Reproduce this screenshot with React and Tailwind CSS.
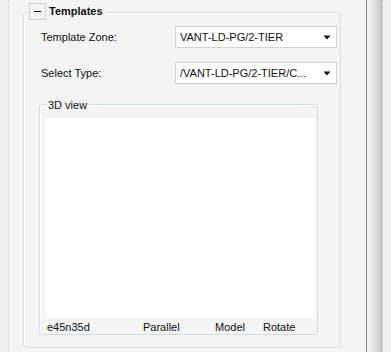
import React from "react";

const font = { fontFamily: '"Liberation Sans", Arial, sans-serif' };

function Combo({ text }) {
  return (
    <div className="w-[162px] h-[22px] bg-white border border-[#d4d4d4] flex items-center pl-[4px] pr-[4px]">
      <span className="flex-1 text-[11px] text-[#111] whitespace-nowrap overflow-hidden">{text}</span>
      <svg width="8" height="5" viewBox="0 0 8 5" className="mr-[1px]">
        <path d="M0.5 0.5 H7.5 L4 4.5 Z" fill="#111" />
      </svg>
    </div>
  );
}

export default function App() {
  return (
    <div className="w-[391px] h-[352px] flex bg-[#f4f4f4] overflow-hidden" style={font}>
      <div className="w-[8px] h-full bg-[#f0f0f0]" />
      <div className="w-[1px] h-full border-l border-dotted border-[#cfcfcf]" />
      <div className="w-[357px] h-full pl-[14px] pt-[12px]">
        <div className="relative w-[318px] h-[336px] border border-[#d3dde6] rounded-[4px] shadow-[inset_1px_1px_0_#ffffff] pl-[17px] pt-[13px]">
          <div className="absolute left-[5px] top-[-10px] flex items-center bg-[#f4f4f4] pr-[3px]">
            <div className="w-[17px] h-[17px] border border-[#c6d0d9] bg-[#f4f4f4] flex items-center justify-center">
              <div className="w-[7px] h-[1px] bg-[#111]" />
            </div>
            <span className="ml-[3px] text-[11px] font-bold text-[#111]">Templates</span>
          </div>

          <div className="flex items-center h-[22px]">
            <span className="w-[134px] text-[11px] text-[#111]">Template Zone:</span>
            <Combo text="VANT-LD-PG/2-TIER" />
          </div>
          <div className="flex items-center h-[22px] mt-[14px]">
            <span className="w-[134px] text-[11px] text-[#111]">Select Type:</span>
            <Combo text="/VANT-LD-PG/2-TIER/C..." />
          </div>

          <div className="relative mt-[20px] ml-[-2px] w-[279px] h-[231px] border border-[#d3dde6] rounded-[3px] shadow-[inset_1px_1px_0_#ffffff] pl-[5px] pt-[13px]">
            <span className="absolute left-[6px] top-[-8px] bg-[#f4f4f4] px-[2px] text-[11px] text-[#111]">3D view</span>
            <div className="w-[271px] h-[200px] bg-white" />
            <div className="relative h-[16px] text-[11px] text-[#111]">
              <span className="absolute left-[2px] top-[1px]">e45n35d</span>
              <span className="absolute left-[98px] top-[1px]">Parallel</span>
              <span className="absolute left-[170px] top-[1px]">Model</span>
              <span className="absolute left-[218px] top-[1px]">Rotate</span>
            </div>
          </div>
        </div>
      </div>
      <div className="w-[1px] h-full bg-[#8a8a8a]" />
      <div className="w-[14px] h-full bg-gradient-to-r from-[#f2f2f2] via-[#e2e2e2] to-[#c9c9c9]" />
      <div className="w-[1px] h-full bg-[#b8b8b8]" />
      <div className="w-[1px] h-full border-l border-dotted border-[#bdbdbd]" />
      <div className="flex-1 h-full bg-[#f0f0f0]" />
    </div>
  );
}
